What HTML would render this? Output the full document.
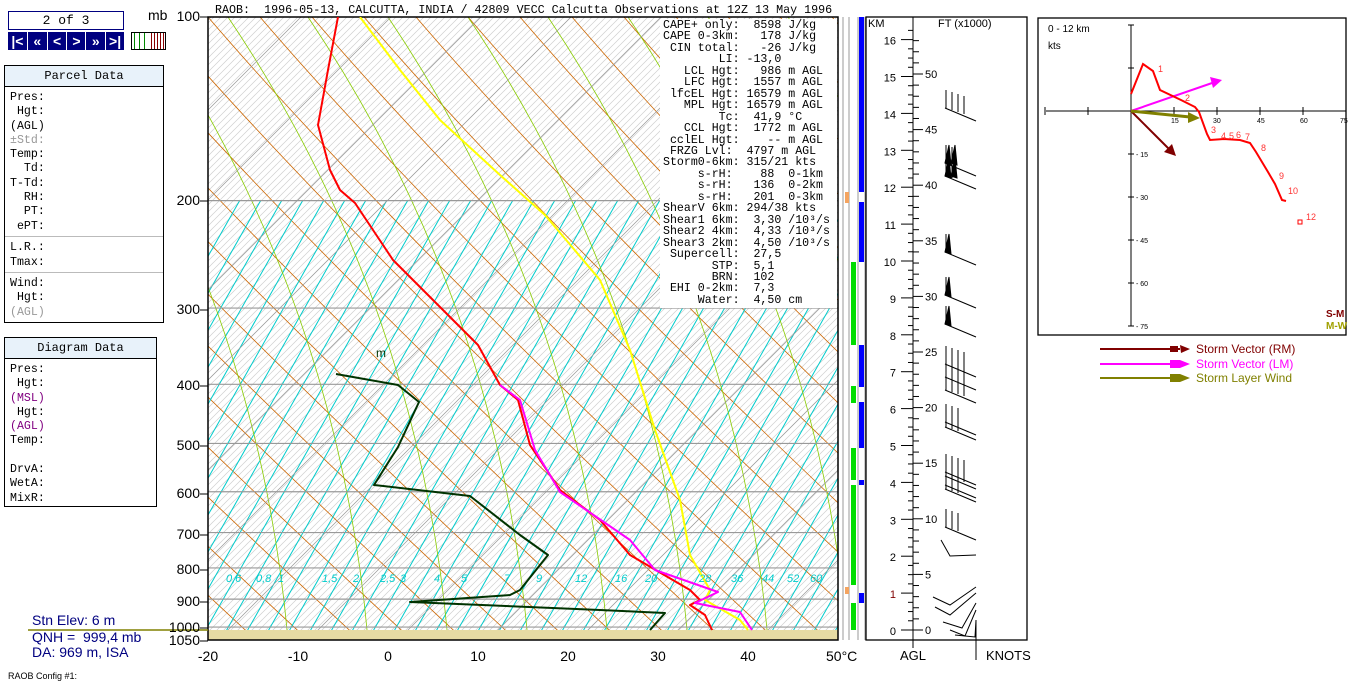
<!DOCTYPE html>
<html><head><meta charset="utf-8">
<style>
body{margin:0;width:1366px;height:686px;background:#fff;position:relative;overflow:hidden;font-family:"Liberation Sans",sans-serif}
.m{font-family:"Liberation Mono",monospace;font-size:11.6px;white-space:pre;position:absolute;line-height:14.3px;color:#000}
.a{position:absolute;white-space:pre}
svg{position:absolute;left:0;top:0}
</style></head><body>
<svg id="s" width="1366" height="686" xmlns="http://www.w3.org/2000/svg">
<defs>
<pattern id="h" width="7" height="7" patternUnits="userSpaceOnUse"><path d="M0,7 L7,0 M-1,1 L1,-1 M6,8 L8,6" stroke="#cfcfcf" stroke-width="0.7"/></pattern>
<clipPath id="c"><rect x="208" y="17" width="630" height="623"/></clipPath>
</defs>
<rect x="208" y="17" width="630" height="623" fill="url(#h)"/>
<g id="grid" clip-path="url(#c)"></g>
<rect x="208" y="630" width="630" height="10" fill="#e6dba3"/>
<rect x="660" y="19" width="177" height="289" fill="#fff"/>
<rect x="208" y="17" width="630" height="623" fill="none" stroke="#000" stroke-width="1.5"/>
<g id="curves" clip-path="url(#c)" fill="none" stroke-linejoin="round">
<polyline stroke="#ffff00" stroke-width="2" points="360,17 400,70 440,120 500,175 545,215 600,280 630,350 655,430 680,500 690,555 710,590 705,600 740,620 748,630"/>
<polyline stroke="#ff0000" stroke-width="2" points="338,17 328,70 318,125 330,170 340,190 355,203 393,260 443,310 478,345 500,385 518,400 530,445 560,490 600,520 630,555 690,590 700,600 690,605 705,615 712,630"/>
<polyline stroke="#ff00ff" stroke-width="2" points="500,385 520,400 535,450 560,492 630,540 655,570 718,592 695,603 740,612 752,630"/>
<polyline stroke="#003300" stroke-width="2" points="336,374 398,385 419,402 398,447 374,485 470,496 520,535 548,555 520,590 510,595 410,602 600,610 665,613 650,630"/>
</g>
<text x="376" y="357" font-size="12" fill="#003300" font-family="Liberation Sans">m</text>
<line x1="843" y1="17" x2="843" y2="640" stroke="#999"/>
<line x1="849" y1="17" x2="849" y2="640" stroke="#999"/>
<line x1="858" y1="17" x2="858" y2="640" stroke="#999"/>
<line x1="865" y1="17" x2="865" y2="640" stroke="#999"/>
<g fill="#0000ff"><rect x="859" y="17" width="5" height="175"/><rect x="859" y="202" width="5" height="60"/><rect x="859" y="345" width="5" height="42"/><rect x="859" y="402" width="5" height="46"/><rect x="859" y="480" width="5" height="5"/><rect x="859" y="593" width="5" height="10"/></g>
<g fill="#00dd00"><rect x="851" y="262" width="5" height="83"/><rect x="851" y="386" width="5" height="17"/><rect x="851" y="448" width="5" height="32"/><rect x="851" y="485" width="5" height="100"/><rect x="851" y="603" width="5" height="27"/></g>
<g fill="#f4a460"><rect x="845" y="192" width="4" height="11"/><rect x="845" y="587" width="4" height="7"/></g>
<rect x="866" y="17" width="161" height="623" fill="none" stroke="#000" stroke-width="1.3"/>
<line x1="913" y1="17" x2="913" y2="640" stroke="#000"/>
<line x1="913" y1="640" x2="913" y2="648" stroke="#000"/>
<g id="km" stroke="#000"></g>
<g id="barbs" stroke="#000" fill="#000" stroke-width="1"></g>
<rect x="1038" y="18" width="308" height="317" fill="none" stroke="#000" stroke-width="1.3"/>
<g id="hodo" stroke="#000"></g>
<line x1="1131" y1="111" x2="1174" y2="154" stroke="#800000" stroke-width="2"/>
<polygon points="1176,156 1164,152 1172,144" fill="#800000"/>
<line x1="1131" y1="111" x2="1215" y2="82" stroke="#ff00ff" stroke-width="2"/>
<polygon points="1222,80 1210,77 1213,88" fill="#ff00ff"/>
<line x1="1131" y1="111" x2="1190" y2="117" stroke="#808000" stroke-width="3"/>
<polygon points="1200,118 1188,112 1188,123" fill="#808000"/>
<polyline fill="none" stroke="#ff0000" stroke-width="2" points="1131,94 1143,64 1153,71 1160,90 1181,100 1195,107 1199,112 1207,134 1210,140 1224,139 1240,140 1250,143 1256,152 1268,172 1275,184 1282,200 1286,201"/>
<rect x="1298" y="220" width="4" height="4" fill="none" stroke="#ff0000"/>
<g font-size="9" fill="#ff3333" font-family="Liberation Sans"><text x="1158" y="72">1</text><text x="1185" y="101">2</text><text x="1211" y="133">3</text><text x="1221" y="139">4</text><text x="1229" y="139">5</text><text x="1236" y="138">6</text><text x="1245" y="140">7</text><text x="1261" y="151">8</text><text x="1279" y="179">9</text><text x="1288" y="194">10</text><text x="1306" y="220">12</text></g>
<g font-size="7" fill="#000" font-family="Liberation Sans"><text x="1171" y="123">15</text><text x="1213" y="123">30</text><text x="1257" y="123">45</text><text x="1300" y="123">60</text><text x="1340" y="123">75</text>
<text x="1136" y="157">- 15</text><text x="1136" y="200">- 30</text><text x="1136" y="243">- 45</text><text x="1136" y="286">- 60</text><text x="1136" y="329">- 75</text></g>
<line x1="1100" y1="349" x2="1180" y2="349" stroke="#800000" stroke-width="2"/><polygon points="1180,345 1181,353 1190,349" fill="#800000"/><rect x="1170" y="346" width="8" height="6" fill="#800000"/>
<line x1="1100" y1="364" x2="1180" y2="364" stroke="#ff00ff" stroke-width="2"/><polygon points="1170,360 1180,360 1190,364 1180,368 1170,368" fill="#ff00ff"/>
<line x1="1100" y1="378" x2="1180" y2="378" stroke="#808000" stroke-width="2"/><polygon points="1170,374 1180,374 1190,378 1180,382 1170,382" fill="#808000"/>
<line x1="28" y1="630" x2="208" y2="630" stroke="#808000" stroke-width="1.5"/>
</svg>

<div class="a" style="left:8px;top:11px;width:114px;height:17px;border:1px solid #000080;font-family:'Liberation Mono',monospace;font-size:13px;text-align:center;line-height:17px">2 of 3</div>
<div class="a" style="left:8px;top:32px;width:116px;height:18px;background:#000080;color:#fff;font-size:14px;font-weight:bold;line-height:18px;display:flex">
<span style="width:19px;text-align:center;border-right:1px solid #fff">|&lt;</span><span style="width:19px;text-align:center;border-right:1px solid #fff">«</span><span style="width:19px;text-align:center;border-right:1px solid #fff">&lt;</span><span style="width:18px;text-align:center;border-right:1px solid #fff">&gt;</span><span style="width:19px;text-align:center;border-right:1px solid #fff">»</span><span style="width:18px;text-align:center">&gt;|</span></div>
<div class="a" style="left:131px;top:32px;width:33px;height:16px;border:1px solid #000;background:repeating-linear-gradient(90deg,#fff 0 2px,#080 2px 3px,#fff 3px 5px);"><div style="position:absolute;right:0;top:0;width:16px;height:16px;background:repeating-linear-gradient(90deg,#fff 0 2px,#800 2px 3px)"></div></div>
<div class="a" style="left:148px;top:7px;font-size:14px">mb</div>

<div class="a" style="left:4px;top:65px;width:158px;height:256px;border:1px solid #000"></div>
<div class="a" style="left:5px;top:66px;width:158px;height:20px;background:#e8f2fa;border-bottom:1px solid #000;font-family:'Liberation Mono',monospace;font-size:12px;text-align:center;line-height:21px">Parcel Data</div>
<div class="a" style="left:5px;top:236px;width:158px;height:1px;background:#bbb"></div>
<div class="a" style="left:5px;top:272px;width:158px;height:1px;background:#bbb"></div>
<div class="m" style="left:10px;top:91px">Pres:
 Hgt:
(AGL)
<span style="color:#999">±Std:</span>
Temp:
  Td:
T-Td:
  RH:
  PT:
 ePT:</div>
<div class="m" style="left:10px;top:240px;line-height:15px">L.R.:
Tmax:</div>
<div class="m" style="left:10px;top:277px">Wind:
 Hgt:
<span style="color:#999">(AGL)</span></div>

<div class="a" style="left:4px;top:337px;width:151px;height:168px;border:1px solid #000"></div>
<div class="a" style="left:5px;top:338px;width:151px;height:20px;background:#e8f2fa;border-bottom:1px solid #000;font-family:'Liberation Mono',monospace;font-size:12px;text-align:center;line-height:21px">Diagram Data</div>
<div class="m" style="left:10px;top:363px">Pres:
 Hgt:
<span style="color:#800080">(MSL)</span>
 Hgt:
<span style="color:#800080">(AGL)</span>
Temp:

DrvA:
WetA:
MixR:</div>

<div class="a" style="left:32px;top:612px;font-size:14px;color:#000080">Stn Elev: 6 m</div>
<div class="a" style="left:32px;top:630px;font-size:14px;color:#000080;line-height:15px">QNH =  999,4 mb
DA: 969 m, ISA</div>
<div class="a" style="left:8px;top:671px;font-size:9px">RAOB Config #1:</div>

<div class="m" style="left:215px;top:3px;font-size:11.7px">RAOB:  1996-05-13, CALCUTTA, INDIA / 42809 VECC Calcutta Observations at 12Z 13 May 1996</div>
<div class="m" style="left:663px;top:20px;line-height:11.45px;font-size:11.6px">CAPE+ only:  8598 J/kg
CAPE 0-3km:   178 J/kg
 CIN total:   -26 J/kg
        LI: -13,0
   LCL Hgt:   986 m AGL
   LFC Hgt:  1557 m AGL
 lfcEL Hgt: 16579 m AGL
   MPL Hgt: 16579 m AGL
        Tc:  41,9 °C
   CCL Hgt:  1772 m AGL
 cclEL Hgt:    -- m AGL
 FRZG Lvl:  4797 m AGL
Storm0-6km: 315/21 kts
     s-rH:    88  0-1km
     s-rH:   136  0-2km
     s-rH:   201  0-3km
ShearV 6km: 294/38 kts
Shear1 6km:  3,30 /10³/s
Shear2 4km:  4,33 /10³/s
Shear3 2km:  4,50 /10³/s
 Supercell:  27,5
       STP:  5,1
       BRN:  102
 EHI 0-2km:  7,3
     Water:  4,50 cm</div>

<div id="lab"></div>
<div class="a" style="left:868px;top:18px;font-size:11px">KM</div>
<div class="a" style="left:938px;top:18px;font-size:11px">FT (x1000)</div>
<div class="a" style="left:900px;top:648px;font-size:13px">AGL</div>
<div class="a" style="left:986px;top:648px;font-size:13px">KNOTS</div>
<div class="a" style="left:1048px;top:24px;font-size:10px">0 - 12 km</div>
<div class="a" style="left:1048px;top:41px;font-size:10px">kts</div>
<div class="a" style="left:1326px;top:309px;font-size:10px;font-weight:bold;color:#800000">S-M</div>
<div class="a" style="left:1326px;top:321px;font-size:10px;font-weight:bold;color:#a0a000">M-W</div>
<div class="a" style="left:1196px;top:342px;font-size:12px;color:#800000">Storm Vector (RM)</div>
<div class="a" style="left:1196px;top:357px;font-size:12px;color:#ff00ff">Storm Vector (LM)</div>
<div class="a" style="left:1196px;top:371px;font-size:12px;color:#808000">Storm Layer Wind</div>

<script>
var NS="http://www.w3.org/2000/svg";
function el(p,t,a){var e=document.createElementNS(NS,t);for(var k in a)e.setAttribute(k,a[k]);p.appendChild(e);return e;}
function Y(p){return 17+(Math.log(p/100)/Math.log(10.5))*623;}
var g=document.getElementById('grid');
for(var i=-20;i<20;i++){var x0=208+i*52;el(g,'path',{d:'M'+x0+',17 Q'+(x0+200)+',250 '+(x0+620)+',640',stroke:'#cc6600','stroke-width':0.8,fill:'none'});}
for(var i=-10;i<40;i++){var xb=200+i*21;el(g,'line',{x1:xb,y1:640,x2:xb+250,y2:200,stroke:'#00cccc','stroke-width':1});}
for(var i=-6;i<12;i++){var x0=208+i*80;el(g,'path',{d:'M'+x0+',640 Q'+(x0-30)+',300 '+(x0-220)+',17',stroke:'#88cc00','stroke-width':0.8,fill:'none'});}
for(var i=-10;i<20;i++){var xb=208+i*90+10;el(g,'line',{x1:xb,y1:640,x2:xb+623,y2:17,stroke:'#999','stroke-width':0.7});}
[200,300,400,500,600,700,800,900,1000].forEach(function(p){el(g,'line',{x1:208,y1:Y(p),x2:838,y2:Y(p),stroke:'#999','stroke-width':1.2});});
var s=document.getElementById('s');
var ml=[['0,6',226],['0,8',256],['1',278],['1,5',322],['2',353],['2,5',380],['3',400],['4',434],['5',461],['7',504],['9',536],['12',575],['16',615],['20',645],['28',699],['36',731],['44',762],['52',787],['60',810]];
ml.forEach(function(m){var t=el(s,'text',{x:m[1],y:582,'font-size':11,'font-style':'italic',fill:'#00cccc','font-family':'Liberation Sans'});t.textContent=m[0];});
var lab=document.getElementById('lab');
[[100,17],[200,201],[300,310],[400,386],[500,446],[600,494],[700,535],[800,570],[900,602],[1000,628],[1050,641]].forEach(function(q){
 el(s,'line',{x1:200,y1:q[1],x2:208,y2:q[1],stroke:'#000'});
 var d=document.createElement('div');d.className='a';d.style.cssText='right:'+(1366-200)+'px;top:'+(q[1]-9)+'px;font-size:14px';d.textContent=q[0];lab.appendChild(d);});
for(var t=-20;t<=50;t+=10){var d=document.createElement('div');d.className='a';var x=208+(t+20)*9;d.style.cssText='left:'+(x-14)+'px;top:648px;font-size:14px;width:28px;text-align:center';d.textContent=(t==50?'50°C':t);if(t==50){d.style.left=(x-12)+'px';d.style.width='40px';d.style.textAlign='left';}lab.appendChild(d);}
var km=document.getElementById('km');
for(var k=0;k<=16.3;k+=0.25){var y=630-k*36.9;var big=Math.abs(k-Math.round(k))<0.01;el(km,'line',{x1:big?901:908,y1:y,x2:913,y2:y});}
for(var k=0;k<=16;k++){var t=el(s,'text',{x:896,y:630-k*36.9+5,'font-size':11,'text-anchor':'end','font-family':'Liberation Sans',fill:k==1?'#800000':'#000'});t.textContent=k;}
for(var f=0;f<=53;f+=1){var y=630-f*11.12;var big=f%5==0;el(km,'line',{x1:913,y1:y,x2:big?923:919,y2:y});}
for(var f=0;f<=50;f+=5){var t=el(s,'text',{x:925,y:630-f*11.12+4,'font-size':11,'font-family':'Liberation Sans'});t.textContent=f;}
var b=document.getElementById('barbs');
function barb(y,n,fl){el(b,'line',{x1:945,y1:y-10,x2:976,y2:y+3});for(var i=0;i<n;i++){var x=946+i*6;el(b,'line',{x1:x,y1:y-10+i*2,x2:x,y2:y-28+i*2});}
 for(var j=0;j<fl;j++){var x=945+j*6;el(b,'polygon',{points:x+','+(y-10)+' '+(x+4)+','+(y-28)+' '+(x+6)+','+(y-8)});}}
[[118,4,0],[173,2,2],[186,2,2],[262,1,1],[305,1,1],[334,1,1],[374,4,0],[387,4,0],[400,4,0],[432,3,0],[437,3,0],[482,4,0],[486,4,0],[495,3,0],[499,3,0],[537,3,0]].forEach(function(a){barb(a[0],a[1],a[2]);});
[[555,'M941,540 L950,556 L976,555'],[588,'M933,597 L950,605 L976,587'],[593,'M935,607 L950,615 L976,593'],[603,'M943,622 L962,628 L976,603'],[610,'M950,630 L965,636 L976,610'],[620,'M955,635 L975,637 L976,620']].forEach(function(a){el(b,'path',{d:a[1],fill:'none'});});
el(b,'line',{x1:976,y1:620,x2:976,y2:660});
var h=document.getElementById('hodo');
el(h,'line',{x1:1046,y1:111,x2:1346,y2:111});el(h,'line',{x1:1131,y1:25,x2:1131,y2:326});
for(var i=-2;i<=5;i++){var x=1131+i*43;el(h,'line',{x1:x,y1:107,x2:x,y2:115});}
for(var i=-2;i<=5;i++){var y=111+i*43;el(h,'line',{x1:1128,y1:y,x2:1134,y2:y});}
</script>
</body></html>
